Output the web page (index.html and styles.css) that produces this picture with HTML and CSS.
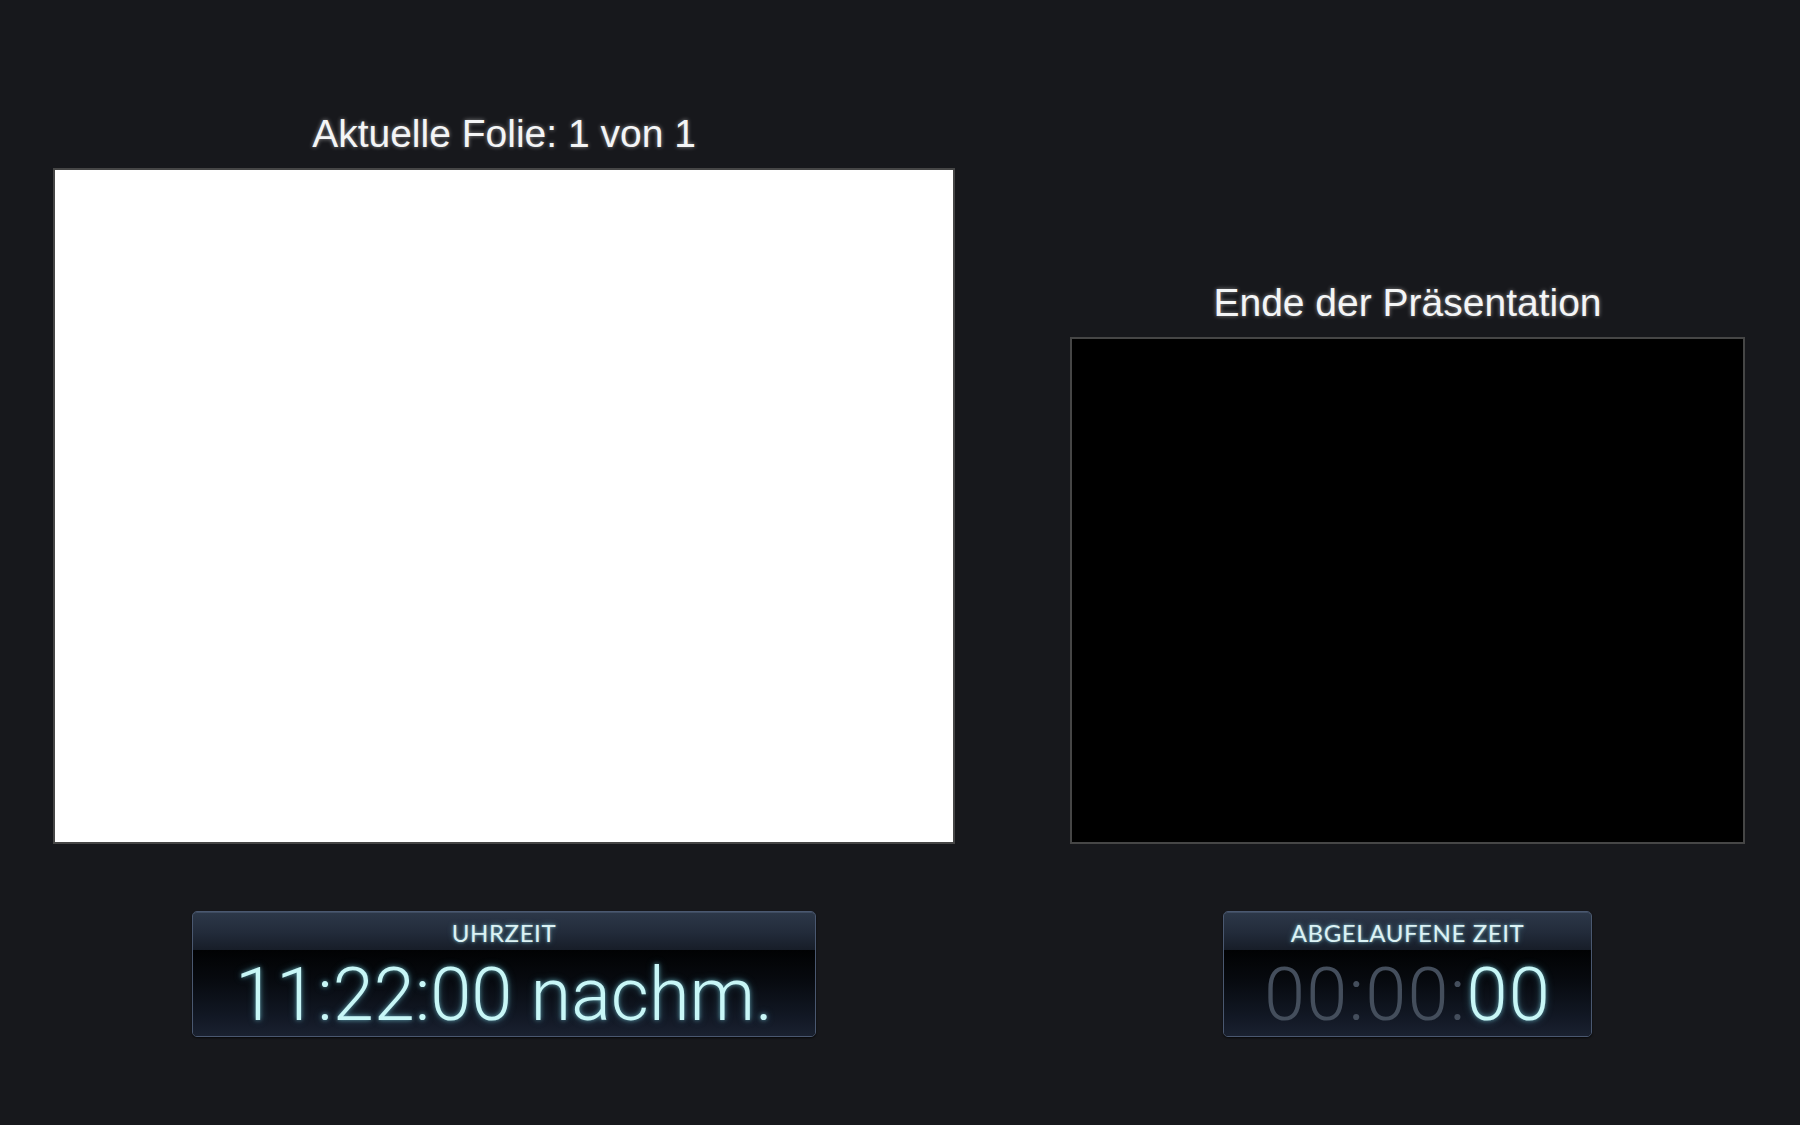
FILE: index.html
```html
<!DOCTYPE html>
<html lang="de">
<head>
<meta charset="utf-8">
<title>Referentenbildschirm</title>
<link rel="stylesheet" href="styles.css">
</head>
<body>
<main class="presenter">
  <section class="pane pane-current">
    <h2 class="pane-title">Aktuelle Folie: 1 von 1</h2>
    <div class="slide slide-current"></div>
    <div class="clock clock-time">
      <div class="clock-label">UHRZEIT</div>
      <div class="clock-value">11:22:00 nachm.</div>
    </div>
  </section>
  <section class="pane pane-next">
    <h2 class="pane-title">Ende der Präsentation</h2>
    <div class="slide slide-next"></div>
    <div class="clock clock-elapsed">
      <div class="clock-label">ABGELAUFENE ZEIT</div>
      <div class="clock-value"><span class="dim">00:00:</span>00</div>
    </div>
  </section>
</main>
</body>
</html>
```

FILE: styles.css
```css
html, body {
  margin: 0;
  padding: 0;
  background: #17181c;
}

body {
  width: 1800px;
  height: 1125px;
  overflow: hidden;
}

.presenter {
  display: flex;
  align-items: stretch;
  gap: 115px;
  height: 1125px;
  box-sizing: border-box;
  padding: 0 0 88px 53px;
}

.pane {
  display: flex;
  flex-direction: column;
  align-items: center;
  justify-content: flex-end;
}

.pane-current {
  width: 902px;
}

.pane-next {
  width: 675px;
}

.pane-title {
  margin: 0 0 15px 0;
  font-family: "Liberation Sans", Arial, sans-serif;
  font-weight: 400;
  font-size: 39px;
  line-height: 39px;
  color: #f4f5f6;
  text-shadow: 0 0 4px rgba(255, 255, 255, 0.5);
  white-space: nowrap;
}

.slide {
  border: 2px solid #464646;
  margin-bottom: 67px;
}

.slide-current {
  width: 898px;
  height: 672px;
  background: #ffffff;
}

.slide-next {
  width: 671px;
  height: 503px;
  background: #000000;
}

.clock {
  border: 1px solid #4a5870;
  border-radius: 5px;
  box-shadow: 0 1px 2px rgba(0, 0, 0, 0.7);
}

.clock-time {
  width: 622px;
}

.clock-elapsed {
  width: 367px;
}

.clock-label {
  height: 38px;
  box-sizing: border-box;
  padding-top: 3px;
  line-height: 35px;
  text-align: center;
  font-family: Lato, "Open Sans", sans-serif;
  font-size: 24px;
  letter-spacing: 0.6px;
  color: #dcf2f4;
  text-shadow: 0 0 3px rgba(160, 225, 240, 0.7), 0 0 6px rgba(120, 210, 235, 0.4);
  background: linear-gradient(#2d3849 0%, #222b3a 55%, #171d28 100%);
  box-shadow: inset 0 1px 0 rgba(120, 140, 170, 0.25);
  border-radius: 4px 4px 0 0;
}

.clock-value {
  height: 86px;
  box-sizing: border-box;
  padding-top: 3px;
  line-height: 83px;
  text-align: center;
  font-family: Roboto, "Liberation Sans", sans-serif;
  font-weight: 300;
  font-size: 74px;
  color: #c8f7f7;
  text-shadow: 0 0 4px rgba(140, 230, 245, 0.55), 0 0 9px rgba(110, 215, 240, 0.35);
  white-space: nowrap;
  background: linear-gradient(#010203 0%, #070a0f 35%, #111723 75%, #1a2130 100%);
  border-radius: 0 0 4px 4px;
}

.clock-elapsed .clock-value {
  letter-spacing: 1.2px;
}

.dim {
  color: #444e5c;
  text-shadow: none;
}
```
